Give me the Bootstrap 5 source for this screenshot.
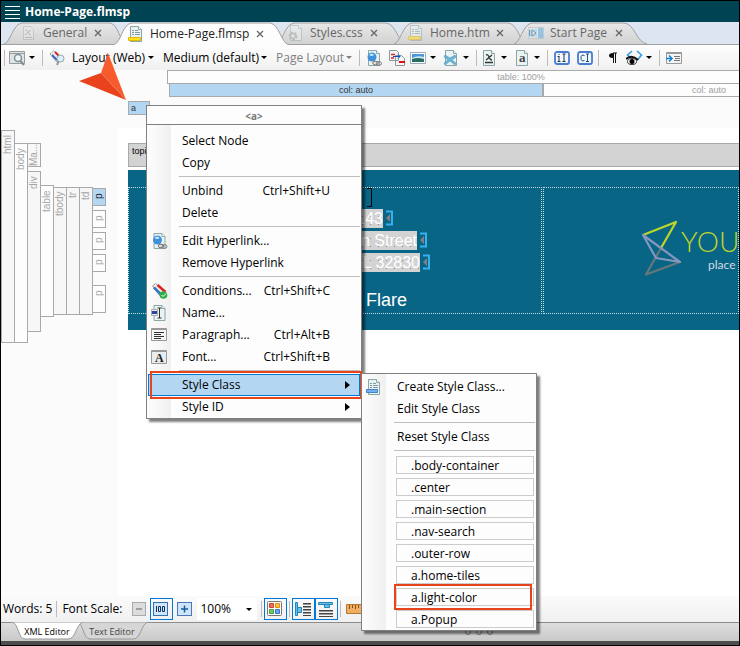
<!DOCTYPE html>
<html lang="en">
<head>
<meta charset="utf-8">
<meta name="viewport" content="width=device-width, initial-scale=1">
<title>Home-Page.flmsp</title>
<link href="https://cdn.jsdelivr.net/npm/bootstrap@5.3.0/dist/css/bootstrap.min.css" rel="stylesheet">
<style>
body{font-family:"Open Sans","Noto Sans",sans-serif;font-size:12px;line-height:16px;color:#000;background:#fff}
button,select{font:inherit;color:inherit;border:0;background:none;padding:0;text-align:left}
svg{display:block;flex:none}
.app{height:100vh;border:1px solid #000;overflow:hidden}
.titlebar{height:21px;background:#004352;color:#fff;font-weight:700;padding:0 4px;gap:5px}
.tabstrip{height:23px;background:#dde5f0;border-bottom:1px solid #a0a0a0;padding-left:3px}
.doctab{height:22px;font-size:12px;color:#666;margin-left:-12px;padding-left:14px;padding-right:24px}
.doctab:first-child{margin-left:0;padding-left:17px}
.doctab .shape{position:absolute;left:0;top:0}
.doctab.on{color:#222;z-index:2;height:23px}
.doctab .lbl{flex:1;position:relative;white-space:nowrap}
.doctab .ico{position:relative}
.doctab .x{position:relative;line-height:0}
.t1{width:122px}.t2{width:174px}.t3{width:130px}.t4{width:132px}.t5{width:133px}
.doctab.t3{padding-left:12px;padding-right:28px}
.g6{gap:6px}
.tools{height:25px;background:linear-gradient(#fefefe,#f0f0f0);padding-left:1px}
.sep{width:5px;height:16px;background:linear-gradient(#bbb,#bbb) 2px 0/1px 100% no-repeat;flex:none}
.tool{width:23px;height:22px;flex:none;display:flex;align-items:center;justify-content:center}
.drop{width:33px;height:22px;flex:none;display:flex;align-items:center;justify-content:space-between;padding:0 5px 0 2px}
.caret,.pick::after{content:"";border:3px solid transparent;border-top-color:#000;border-bottom:0;flex:none}
.pick{display:flex;align-items:center;padding:0 5px 0 4px;height:22px;flex:none}
.pick select{flex:1;min-width:0;appearance:none;outline:0}
.pick.off{color:#808080}.pick.off::after{border-top-color:#808080}
.w1{width:91px}.w2{width:113px}.w3{width:85px}
.gutter{width:117px;background:#fbfbfb;padding-top:60px;flex:none}
.tag{width:14px;margin-right:-1px;border:1px solid #a9a9a9;background:#f7f7f7;color:#a6a6a6;font:10px/12px "Liberation Sans",Arial,sans-serif;writing-mode:vertical-rl;transform:rotate(180deg);text-align:right;padding-bottom:4px;white-space:nowrap;overflow:hidden}
.tag.alt{background:#fdfdfd}
.tag.sel{background:#b3d7f3;color:#222}
.h213{height:213px}.h200{height:200px}.h24{height:24px}.h161{height:161px}.h132{height:132px}.h128{height:128px}.h18{height:18px}.h28{height:28px}
.mt13{margin-top:13px}.mt55{margin-top:55px}.mt57{margin-top:57px}.mt58{margin-top:58px}
.g4{gap:4px}
.gap-last{margin-top:9px}
.bars{background:#fbfbfb;height:58px;padding-left:49px;font:9px/12px "Liberation Sans",Arial,sans-serif;color:#a0a0a0;text-align:center}
.bar{border:1px solid #a9a9a9;background:#fdfdfd;height:14px}
.tablebar{width:708px}
.colbars{display:grid;grid-template-columns:374px 332px;padding-left:2px;margin-top:-1px;width:708px}
.selbar{background:#b3d7f3;color:#333}
.anchor{width:22px;height:14px;margin:4px 0 0 -39px;text-align:left;padding-left:2px}
.page{padding:15px 0 0 10px}
.topic{height:24px;border:1px solid #a9a9a9;border-right:0;background:#d3d3d3;font:9px/14px "Liberation Sans",Arial,sans-serif;color:#000;padding:0 3px}
.hero{margin-top:3px;background:#086585;padding:17px 0;height:160px}
.cellbox{border:1px dotted #c9dfe6;height:127px;overflow:hidden}
.cella{width:414px;flex:none;color:#fff;font:16px/19px "Liberation Sans",Arial,sans-serif;padding-left:154px;gap:3px}
.cellb{margin-left:1px;padding:31px 0 0 97px}
.run{background:linear-gradient(#d3d3d3 7px,transparent 7px) 0 0/8px 8px,linear-gradient(90deg,#d3d3d3 7px,#888 7px) 0 0/8px 8px;text-align:right;overflow:hidden;white-space:nowrap}
.r0{width:90px;height:18px}.r1{width:100px}.r2{width:134px}.r3{width:137px}
.heading{font-size:18px;line-height:24px;margin-top:13px;width:124px;text-align:right}
.brand{color:#bfd52b;font:300 28px/28px Lato,sans-serif}
.tagline{color:#d3dbe6;font:12px/14px Lato,sans-serif;margin:3px 0 0 27px}
.status{height:26px;background:linear-gradient(#fbfbfb,#f0f0f0);white-space:nowrap;padding-left:2px}
.ms2{margin-left:2px}.me3{margin-right:3px}
.boxed{width:23px;height:22px;border:1px solid #0078d7;display:flex;align-items:center;justify-content:center;flex:none}
.zoomsel{width:60px;background:#fff;margin:0 2px 0 4px}
.views{height:19px;background:linear-gradient(#dedede,#c9c9c9);border-top:1px solid #8c8c8c;font:9px/14px "Open Sans",sans-serif;padding-left:10px}
.view{width:72px;height:18px;margin-right:-7px;color:#444;text-align:center}
.view svg{position:absolute;left:0;top:-1px}
.view span{position:relative}
.view.on{color:#000;z-index:1}
.grip{gap:5px;margin-left:324px}
.grip i{width:6px;height:6px;border:1px solid #777;border-radius:50%}
.foot{height:4px;background:#4d4d4d}
.menu{background:linear-gradient(90deg,#fdfdfd 0,#f0f0f0 24px,#fdfdfd 24px);border:1px solid #808080;border-radius:0;padding:0;margin:0;min-width:0;font-size:12px;color:#000;box-shadow:3px 3px 2px rgba(0,0,0,.5)}
.menu-a{left:146px;top:105px;width:216px}
.menu-b{left:361px;top:373px;width:176px;padding:2px 0 0}
.mhead{height:19px;background:#fdfdfd;border-bottom:1px solid #808080;font:700 10px/21px "Open Sans",sans-serif;color:#777;text-align:center;margin-bottom:5px}
.mi{height:22px;width:100%;display:flex;align-items:center;padding-right:11px;position:relative}
.mi .mic{width:35px;padding-left:4px;flex:none}
.mi .key{margin-left:auto;margin-right:20px}
.mi .more{margin-left:auto;border:5px solid transparent;border-width:4px 0 4px 5px;border-left-color:#000}
.msep{height:1px;margin:2px 1px 3px 32px;background:#bdbdbd}
.mi.hot::before{content:"";position:absolute;inset:0 1px 0 1px;border:1px solid #0078d7;background:#b3d7f3}
.mi.hot>*{position:relative}
.mark-a::after{content:"";position:absolute;inset:-3px -1px -3px 3px;border:2px solid #e8431d}
.entry{height:22px;padding:2px 2px 2px 34px;position:relative}
.entry button{width:100%;height:18px;border:1px solid #ccc;background:#fdfdfd;padding-left:14px;line-height:15px;display:block}
.mark-b::after{content:"";position:absolute;inset:-2px 4px -2px 32px;border:2px solid #e8431d}
.pointer{position:absolute;left:78px;top:52px;z-index:5;pointer-events:none}
</style>
<script src="https://cdn.jsdelivr.net/npm/bootstrap@5.3.0/dist/js/bootstrap.bundle.min.js"></script>
</head>
<body>
<svg width="0" height="0" class="position-absolute">
<defs>
<linearGradient id="tabg" x2="0" y2="1"><stop stop-color="#e8e8e8"/><stop offset="1" stop-color="#d2d2d2"/></linearGradient>
<symbol id="doc" viewBox="0 0 16 16"><path d="M2.500.5h8l3 3v12h-11z" fill="#eaf3f3" stroke="#8ba5a8"/><path d="M10.500.5v3h3" fill="#fff" stroke="#8ba5a8"/></symbol>
<symbol id="lines" viewBox="0 0 16 16"><path d="M4 4.500h2m1 0h3M4 6.500h2m1 0h5M4 8.500h2m1 0h5" stroke="#7f9a9c"/></symbol>
<symbol id="page" viewBox="0 0 16 16"><use href="#doc"/><use href="#lines"/><path d="M.5 11.500h12v3H.5z" fill="#ffe11f" stroke="#e3b900"/></symbol>
<symbol id="pageb" viewBox="0 0 16 16"><use href="#doc"/><use href="#lines"/><path d="M.5 10.500h11v3H.5z" fill="#73aef0" stroke="#4582c7"/></symbol>
<symbol id="close" viewBox="0 0 8 8"><path d="M1 1l6 6M7 1L1 7" stroke="#666" stroke-width="1.300"/></symbol>
<symbol id="link" viewBox="0 0 16 16"><use href="#doc"/><circle cx="6" cy="7" r="4.500" fill="#3f91dc"/><path d="M3 5q3-3 5 0-2 2-5 0" fill="#c5e7ff"/><g fill="none" stroke="#777"><ellipse cx="9.500" cy="13" rx="2.800" ry="1.800" fill="#ddd"/><ellipse cx="13" cy="13.500" rx="2.500" ry="1.800"/></g></symbol>
<symbol id="cond" viewBox="0 0 16 16"><path d="M1 3l3-2.500L14 10l-4 5z" fill="#eee" stroke="#999"/><path d="M6 2l8 7" stroke="#d22" stroke-width="2.500"/><path d="M2.500 4.500l7 7" stroke="#3477c4" stroke-width="2.500"/></symbol>
</defs>
</svg>
<div class="app d-flex flex-column position-relative">
<header class="titlebar d-flex align-items-center">
<svg width="15" height="14" viewBox="0 0 15 14"><path d="M0 1.500h15M0 5.500h15M0 9.500h15M0 13.500h15" stroke="#fff"/></svg>
<span>Home-Page.flmsp</span>
</header>
<nav class="tabstrip d-flex" aria-label="Documents">
<div class="doctab t1 d-flex align-items-center g6 position-relative">
<svg class="shape" width="122" height="22"><path d="M0 22C6 21 9 2 18 1H106C114 2 116 20 122 22" fill="url(#tabg)" stroke="#a0a0a0"/></svg>
<svg class="ico" width="16" height="16" opacity=".35"><path d="M2.500 1.500h7l3 3v10h-10z" fill="#eee" stroke="#999"/><path d="M4 12.500h7" stroke="#777"/><path d="M4 5q2-1 3 2t3 3M10 5L4 10" stroke="#777" fill="none"/></svg>
<button class="lbl">General</button><button class="x" aria-label="Close General"><svg width="8" height="8"><use href="#close"/></svg></button></div>
<div class="doctab on t2 d-flex align-items-center g6 position-relative">
<svg class="shape" width="174" height="24"><path d="M0 22.500C7 21 8 2 18 1H156C165 2 167 20 174 22.500V24H0z" fill="#fdfdfd"/><path d="M0 22.500C7 21 8 2 18 1H156C165 2 167 20 174 22.500" fill="none" stroke="#a0a0a0"/></svg>
<svg class="ico" width="16" height="16"><use href="#page"/></svg>
<button class="lbl">Home-Page.flmsp</button><button class="x" aria-label="Close Home-Page"><svg width="8" height="8"><use href="#close"/></svg></button></div>
<div class="doctab t3 d-flex align-items-center g6 position-relative">
<svg class="shape" width="130" height="22"><path d="M0 22C6 21 9 2 18 1H110C120 2 122 20 130 22" fill="url(#tabg)" stroke="#a0a0a0"/></svg>
<svg class="ico" width="16" height="16" opacity=".4"><use href="#doc"/><circle cx="5" cy="11" r="3" fill="none" stroke="#888" stroke-width="2.500" stroke-dasharray="2 1"/><circle cx="5" cy="11" r="2.500" fill="none" stroke="#999"/></svg>
<button class="lbl">Styles.css</button><button class="x" aria-label="Close Styles"><svg width="8" height="8"><use href="#close"/></svg></button></div>
<div class="doctab t4 d-flex align-items-center g6 position-relative">
<svg class="shape" width="132" height="22"><path d="M0 22C6 21 9 2 18 1H114C124 2 126 20 132 22" fill="url(#tabg)" stroke="#a0a0a0"/></svg>
<svg class="ico" width="16" height="16" opacity=".5"><use href="#page"/></svg>
<button class="lbl">Home.htm</button><button class="x" aria-label="Close Home"><svg width="8" height="8"><use href="#close"/></svg></button></div>
<div class="doctab t5 d-flex align-items-center g6 position-relative">
<svg class="shape" width="133" height="22"><path d="M0 22C6 21 9 2 18 1H110C121 2 122 20 133 22" fill="url(#tabg)" stroke="#a0a0a0"/></svg>
<svg class="ico" width="16" height="16" opacity=".6"><path d="M.5 2.500h15v11H.5z" fill="#eee" stroke="#bbb"/><path d="M0 4h9v8H0z" fill="#a9d6ea"/><path d="M10 3h5v10h-5z" fill="#62b4e8"/><path d="M1.500 5v6" stroke="#368"/><path d="M4 5v6l4-3z" fill="#eef" stroke="#368"/></svg>
<button class="lbl">Start Page</button><button class="x" aria-label="Close Start Page"><svg width="8" height="8"><use href="#close"/></svg></button></div>
</nav>
<div class="tools d-flex align-items-center" role="toolbar" aria-label="Editor">
<span class="sep"></span>
<button class="drop" aria-label="Preview"><svg width="16" height="16"><path d="M.5 1.500h15v12H.5z" fill="#dfe5e5" stroke="#999"/><path d="M1 3.500h14" stroke="#999"/><circle cx="9" cy="8" r="3.500" fill="#eef6f8" stroke="#7c9299" stroke-width="1.500"/><path d="M11.500 11l3.500 4" stroke="#7c9299" stroke-width="2"/></svg><span class="caret"></span></button>
<span class="sep"></span>
<button class="tool" aria-label="Conditions"><svg width="16" height="16"><path d="M1 4l4-3.500 6 7-3 5z" fill="#eee" stroke="#999" stroke-dasharray="2 1"/><path d="M6 2l4 4" stroke="#d22" stroke-width="2"/><path d="M3 5l5 5" stroke="#36c" stroke-width="2"/><circle cx="11.500" cy="8.500" r="3.500" fill="#def" stroke="#8aa"/><path d="M9.500 11.500L8 15" stroke="#999" stroke-width="2"/></svg></button>
<label class="pick w1"><select aria-label="Layout"><option>Layout (Web)</option></select></label>
<label class="pick w2"><select aria-label="Medium"><option>Medium (default)</option></select></label>
<label class="pick off w3"><select aria-label="Page layout"><option>Page Layout</option></select></label>
<span class="sep"></span>
<button class="tool" aria-label="Hyperlink"><svg width="16" height="16"><use href="#link"/></svg></button>
<button class="tool" aria-label="Cross-reference"><svg width="16" height="16"><path d="M.5.5h7l2 2v8h-9zM6.500 5.500h6l3 3v7h-9z" fill="#f4f4f4" stroke="#8a9a9c"/><path d="M2 4.500h4M2 8h3" stroke="#d22" stroke-width="1.500"/><path d="M4 6.500h7m-2-2l2 2-2 2" stroke="#124fbd" fill="none"/><path d="M10 12h6" stroke="#d11" stroke-width="2"/></svg></button>
<button class="drop" aria-label="Image"><svg width="16" height="16"><path d="M.5 2.500h15v11H.5z" fill="#fff" stroke="#9ab"/><path d="M2 4h12v4H2z" fill="#4c96dc"/><path d="M2 8q5-3 12-1v2H2z" fill="#cfe9f6"/><path d="M2 9q6-2 12 0v3H2z" fill="#286e62"/></svg><span class="caret"></span></button>
<button class="drop" aria-label="Multimedia"><svg width="16" height="16"><use href="#doc"/><path d="M2 5l5 3 5-3 1 2-4 3 4 3-1 2-5-4-5 4-1-2 4-3-4-3z" fill="#67b6d5" stroke="#4a8fb0" stroke-width=".5"/></svg><span class="caret"></span></button>
<span class="sep"></span>
<button class="drop" aria-label="Variable"><svg width="16" height="16"><use href="#doc"/><path d="M4 12.500h8M5 5q2-1 3 2t3 3M11 5L5 10" stroke="#333" fill="none" stroke-width="1.300"/></svg><span class="caret"></span></button>
<button class="drop" aria-label="Snippet"><svg width="16" height="16"><use href="#doc"/><text x="5" y="12" font-family="Liberation Serif" font-weight="700" font-size="13" fill="#444">a</text></svg><span class="caret"></span></button>
<span class="sep"></span>
<button class="tool" aria-label="Index"><svg width="16" height="16"><rect x="1" y="2" width="14" height="12" rx="2" fill="#f2f7ff" stroke="#4a7cd0" stroke-width="1.800"/><path d="M5 6.500v5M3.500 6.500h2M3.500 11.500h3M5 4v1M10 4v7M8.500 4h3M8.500 11.500h3" stroke="#235"/></svg></button>
<button class="tool" aria-label="Concept"><svg width="16" height="16"><rect x="1" y="2" width="14" height="12" rx="2" fill="#f2f7ff" stroke="#4a7cd0" stroke-width="1.800"/><path d="M7.500 5.500Q4 4 4 8T7.500 10.500M10.500 4v7M9 4h3M9 11.500h3" fill="none" stroke="#257"/></svg></button>
<span class="sep"></span>
<button class="tool" aria-label="Show marks"><svg width="10" height="12"><path d="M5 1h4M5.500 1v10M7.500 1v10" stroke="#111"/><path d="M5 1Q1 1 1 3.500T5 6z" fill="#111"/></svg></button>
<button class="drop" aria-label="Show tags"><svg width="17" height="16"><path d="M6 1L1.500 5 5 8M11 1l4.500 4-4 5" fill="none" stroke="#2a9ae0" stroke-width="1.500"/><path d="M0 9q6-5 12 1" stroke="#111" stroke-width="2" fill="none"/><ellipse cx="6" cy="11.500" rx="4.500" ry="3" fill="#fff" stroke="#333"/><circle cx="6" cy="11.500" r="2.500"/></svg><span class="caret"></span></button>
<span class="sep"></span>
<button class="tool" aria-label="Open pane"><svg width="16" height="14"><path d="M.5 1.500h15v11H.5z" fill="#f4f4f4" stroke="#999"/><path d="M1 2h14" stroke="#999" stroke-width="2"/><path d="M8 5.500h6M9 7.500h5M8 9.500h6" stroke="#777"/><path d="M0 7.500h6m-3-3l3 3-3 3" fill="none" stroke="#147fd0" stroke-width="1.500"/></svg></button>
</div>
<main class="d-flex flex-grow-1 overflow-hidden">
<aside class="gutter d-flex align-items-start">
<div class="tag h213">html</div>
<div class="tag alt h200 mt13">body</div>
<div class="d-flex flex-column mt13 g4"><div class="tag h24">Ma...</div><div class="tag h161">div</div></div>
<div class="tag alt h132 mt55">table</div>
<div class="tag h128 mt57">tbody</div>
<div class="tag h128 mt57">tr</div>
<div class="tag h128 mt57">td</div>
<div class="d-flex flex-column mt58 g4"><div class="tag sel h18">p</div><div class="tag alt h18">p</div><div class="tag alt h18">p</div><div class="tag alt h18">p</div><div class="tag alt h28 gap-last">p</div></div>
</aside>
<section class="flex-grow-1 overflow-hidden">
<div class="bars"><div class="bar tablebar">table: 100%</div><div class="colbars"><div class="bar selbar">col: auto</div><div class="bar">col: auto</div></div><div class="bar selbar anchor">a</div></div>
<div class="page">
<div class="topic">topic</div>
<div class="hero d-flex">
<div class="cellbox cella d-flex flex-column">
<div class="r0 d-flex justify-content-end"><svg width="6" height="19"><path d="M0 .5h4.500v18H0" fill="none" stroke="#000"/></svg></div>
<div class="d-flex"><span class="run r1">555-0143</span><svg width="11" height="19"><path d="M3 2.500h6v13H3" fill="none" stroke="#38b0f0" stroke-width="2"/><path d="M7 5v8L3 9z" fill="#808080"/></svg></div>
<div class="d-flex"><span class="run r2">123 Main Street</span><svg width="11" height="19"><path d="M3 2.500h6v13H3" fill="none" stroke="#38b0f0" stroke-width="2"/><path d="M7 5v8L3 9z" fill="#808080"/></svg></div>
<div class="d-flex"><span class="run r3">City, FL 32830</span><svg width="11" height="19"><path d="M3 2.500h6v13H3" fill="none" stroke="#38b0f0" stroke-width="2"/><path d="M7 5v8L3 9z" fill="#808080"/></svg></div>
<div class="heading">Flare</div>
</div>
<div class="cellbox cellb flex-grow-1 d-flex">
<svg width="40" height="58" viewBox="642 218 40 58"><g fill="none" stroke-width="2.200" stroke-linejoin="round"><path d="M662 247l-15 26.500L681 261" stroke="#66777a"/><path d="M644 234l33-13-15 26" stroke="#bfd52b"/><path d="M644 234l37 27-24-4z" stroke="#8497bf"/></g></svg>
<div class="pt-2"><div class="brand">YOU</div><div class="tagline">place</div></div>
</div>
</div>
</div>
</section>
</main>
<div class="status d-flex align-items-center">
<span>Words: 5</span><span class="sep ms2 me3"></span><label for="scale">Font Scale:</label>
<button class="ms-2 me3" aria-label="Smaller"><svg width="16" height="16"><rect x="1.500" y="1.500" width="13" height="13" fill="#ddd" stroke="#aaa"/><path d="M5 8h6" stroke="#888" stroke-width="1.500"/></svg></button>
<button class="boxed" aria-label="Actual size"><svg width="16" height="16"><rect x=".5" y="1.500" width="14" height="13" fill="#cfe5fb" stroke="#3570b5"/><path d="M3.500 5v6M5.500 5.500h2v5h-2zM9.500 5.500h2v5h-2z" fill="none" stroke="#135"/></svg></button>
<button class="ms-1" aria-label="Larger"><svg width="16" height="16"><rect x=".5" y="1.500" width="14" height="13" fill="#cfe5fb" stroke="#4a78b8"/><path d="M4 8h7M7.500 4.500v7" stroke="#135f9e" stroke-width="1.500"/></svg></button>
<span class="pick zoomsel"><select id="scale"><option>100%</option></select></span>
<span class="sep"></span>
<button class="boxed" aria-label="Colors"><svg width="16" height="16"><rect x=".5" y=".5" width="14" height="14" rx="1" fill="#fff" stroke="#777"/><path d="M2.500 2.500h4v4h-4z" fill="#ef6a5a" stroke="#c43"/><path d="M8.500 2.500h4v4h-4z" fill="#ffc03a" stroke="#e09010"/><path d="M2.500 8.500h4v4h-4z" fill="#74c860" stroke="#4a9a3a"/><path d="M8.500 8.500h4v4h-4z" fill="#6aa4ee" stroke="#3a74c8"/></svg></button>
<span class="sep"></span>
<button class="boxed" aria-label="Structure left"><svg width="16" height="16"><path d="M.5 1.500h2v13h-2zM2.500 6.500h4v5h-4z" fill="#6cc0e8" stroke="#1f86b8"/><path d="M8 2.500h8M8 5.500h8M8 8.500h8M8 11.500h8M8 14.500h8" stroke="#444"/><path d="M8 3.500h8M8 6.500h8M8 9.500h8M8 12.500h8" stroke="#999"/></svg></button>
<button class="boxed" aria-label="Structure top"><svg width="16" height="16"><path d="M.5 1.500h14v2H.5zM6.500 3.500h5v3h-5z" fill="#6cc0e8" stroke="#1f86b8"/><path d="M1 9.500h14M1 12.500h14M1 15.500h14" stroke="#444"/><path d="M1 10.500h14M1 13.500h14" stroke="#999"/></svg></button>
<span class="sep me3"></span>
<button aria-label="Ruler"><svg width="20" height="16"><path d="M.5 3.500h20v9H.5z" fill="#efae62" stroke="#b9772e"/><path d="M3.500 4v4M6.500 4v3M9.500 4v4M12.500 4v3" stroke="#8a5418"/></svg></button>
</div>
<nav class="views d-flex align-items-center" aria-label="Views">
<button class="view on position-relative"><svg width="72" height="18"><path d="M1 0C8 2 7 17 14 17H57C65 17 65 2 72 0z" fill="#fff" stroke="#999"/></svg><span>XML Editor</span></button>
<button class="view position-relative"><svg width="72" height="18"><path d="M1 0C8 2 7 17 14 17H57C65 17 65 2 72 0z" fill="#d6d6d6" stroke="#999"/></svg><span>Text Editor</span></button>
<div class="grip d-flex"><i></i><i></i><i></i></div>
</nav>
<footer class="foot"></footer>
</div>
<div class="menu menu-a dropdown-menu show">
<div class="mhead">&lt;a&gt;</div>
<button class="mi"><span class="mic"></span>Select Node</button>
<button class="mi"><span class="mic"></span>Copy</button>
<div class="msep"></div>
<button class="mi"><span class="mic"></span>Unbind<span class="key">Ctrl+Shift+U</span></button>
<button class="mi"><span class="mic"></span>Delete</button>
<div class="msep"></div>
<button class="mi"><span class="mic"><svg width="17" height="16"><use href="#link"/></svg></span>Edit Hyperlink...</button>
<button class="mi"><span class="mic"></span>Remove Hyperlink</button>
<div class="msep"></div>
<button class="mi"><span class="mic"><svg width="17" height="16"><use href="#cond"/><circle cx="12.500" cy="12" r="3.800" fill="#2fae45"/><path d="M10.500 12l1.500 1.500 3-3" stroke="#fff" fill="none"/></svg></span>Conditions...<span class="key">Ctrl+Shift+C</span></button>
<button class="mi"><span class="mic"><svg width="17" height="16"><use href="#doc"/><path d="M.5 4.500h6v6h-6z" fill="#eee" stroke="#aaa"/><path d="M1 7.500h5" stroke="#2746a8" stroke-width="3"/><path d="M8.500 3v10M6.500 3h4M6.500 13h4" stroke="#333"/></svg></span>Name...</button>
<button class="mi"><span class="mic"><svg width="17" height="16"><path d="M.5 1.500h15v12H.5z" fill="#f6f6f6" stroke="#999"/><path d="M1 2h14" stroke="#999" stroke-width="2"/><path d="M3 5.500h10M3 7.500h7M3 9.500h10M3 11.500h7" stroke="#333"/></svg></span>Paragraph...<span class="key">Ctrl+Alt+B</span></button>
<button class="mi"><span class="mic"><svg width="17" height="16"><path d="M.5 1.500h15v13H.5z" fill="#e8eeee" stroke="#999"/><path d="M1 2h14" stroke="#999" stroke-width="2"/><text x="4" y="13" font-family="Liberation Serif" font-weight="700" font-size="12" fill="#222">A</text></svg></span>Font...<span class="key">Ctrl+Shift+B</span></button>
<div class="msep"></div>
<button class="mi hot mark-a"><span class="mic"></span><span>Style Class</span><span class="more"></span></button>
<button class="mi"><span class="mic"></span>Style ID<span class="more"></span></button>
</div>
<div class="menu menu-b dropdown-menu show">
<button class="mi"><span class="mic"><svg width="16" height="16"><use href="#pageb"/></svg></span>Create Style Class...</button>
<button class="mi"><span class="mic"></span>Edit Style Class</button>
<div class="msep"></div>
<button class="mi"><span class="mic"></span>Reset Style Class</button>
<div class="msep"></div>
<div class="entry"><button>.body-container</button></div>
<div class="entry"><button>.center</button></div>
<div class="entry"><button>.main-section</button></div>
<div class="entry"><button>.nav-search</button></div>
<div class="entry"><button>.outer-row</button></div>
<div class="entry"><button>a.home-tiles</button></div>
<div class="entry mark-b"><button>a.light-color</button></div>
<div class="entry"><button>a.Popup</button></div>
</div>
<svg class="pointer" width="50" height="50" viewBox="78 52 50 50"><path d="M79 81l22-8 25 27z" fill="#e8431d"/><path d="M108 53l18 47-25-27z" fill="#f75a2c"/></svg>
</body>
</html>
